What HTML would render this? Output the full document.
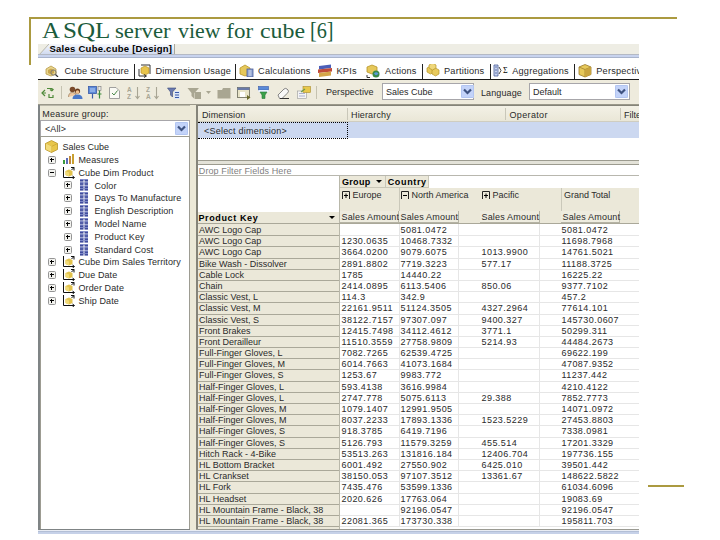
<!DOCTYPE html>
<html><head><meta charset="utf-8">
<style>
*{margin:0;padding:0;box-sizing:border-box}
html,body{width:720px;height:540px;overflow:hidden;background:#fff;position:relative}
body{font-family:"Liberation Sans",sans-serif;color:#000}
.a{position:absolute}
.t{position:absolute;white-space:nowrap;font-size:9px;line-height:10px;color:#2a2a2a}
.title{position:absolute;left:42px;top:16.5px;font-family:"Liberation Serif",serif;font-size:23px;line-height:28px;color:#1c5c3c;white-space:nowrap}
</style></head><body>
<div class="a" style="left:29px;top:17px;width:648px;height:2px;background:#ab9a40"></div>
<div class="a" style="left:29px;top:17px;width:2px;height:48px;background:#ab9a40"></div>
<div class="a" style="left:648px;top:485px;width:36px;height:2px;background:#ab9a40"></div>
<div class="title" style="left:41.6px;transform:scale(1.08,1);transform-origin:0 20.5px;">A</div>
<div class="title" style="left:63.2px;transform:scale(1.09,1);transform-origin:0 20.5px;">SQL</div>
<div class="title" style="left:115px;transform:scale(0.99,0.9);transform-origin:0 20.5px;">server</div>
<div class="title" style="left:178.3px;transform:scale(0.95,0.9);transform-origin:0 20.5px;">view</div>
<div class="title" style="left:226.3px;transform:scale(1.0,0.9);transform-origin:0 20.5px;">for</div>
<div class="title" style="left:259.6px;transform:scale(1.04,0.9);transform-origin:0 20.5px;">cube</div>
<div class="title" style="left:309.8px;transform:scale(0.88,1);transform-origin:0 20.5px;">[6]</div>
<div class="a" style="left:0;top:0;width:639px;height:534px;overflow:hidden">
<div class="a" style="left:38px;top:44px;width:601px;height:490px;background:#ece9d8"></div>
<div class="a" style="left:38px;top:44px;width:601px;height:11px;background:#eeede4"></div>
<svg class="a" style="left:38px;top:44px" width="137" height="12"><defs><linearGradient id="tg" x1="0" y1="0" x2="0" y2="1"><stop offset="0" stop-color="#f6f7fb"/><stop offset="1" stop-color="#c9d5ee"/></linearGradient></defs><path d="M0 12 L11 0 L136 0 L136 12 Z" fill="url(#tg)"/><path d="M0 12 L11 0" stroke="#b9b8ac" stroke-width="1"/><path d="M136.5 0 L136.5 12" stroke="#a9a89c" stroke-width="1"/></svg>
<div class="t" style="left:49.5px;top:43px;color:#000;font-weight:bold;font-size:9.5px;line-height:12px;letter-spacing:0.25px">Sales Cube.cube [Design]</div>
<div class="a" style="left:38px;top:54px;width:601px;height:1px;background:#b4b9c4"></div>
<div class="a" style="left:38px;top:55px;width:601px;height:3px;background:#c8d3ee"></div>
<div class="a" style="left:38px;top:57px;width:601px;height:1px;background:#a9b4cc"></div>
<div class="a" style="left:38px;top:58px;width:601px;height:21px;background:#fff"></div>
<div class="a" style="left:38px;top:79px;width:601px;height:1px;background:#1a1a1a"></div>
<div class="t" style="left:64.5px;top:66px;font-size:9.2px;line-height:10px;letter-spacing:0.2px">Cube Structure</div>
<div class="t" style="left:155.5px;top:66px;font-size:9.2px;line-height:10px;letter-spacing:0.2px">Dimension Usage</div>
<div class="t" style="left:258.1px;top:66px;font-size:9.2px;line-height:10px;letter-spacing:0.2px">Calculations</div>
<div class="t" style="left:336.5px;top:66px;font-size:9.2px;line-height:10px;letter-spacing:0.2px">KPIs</div>
<div class="t" style="left:385.1px;top:66px;font-size:9.2px;line-height:10px;letter-spacing:0.2px">Actions</div>
<div class="t" style="left:444.0px;top:66px;font-size:9.2px;line-height:10px;letter-spacing:0.2px">Partitions</div>
<div class="t" style="left:512.2px;top:66px;font-size:9.2px;line-height:10px;letter-spacing:0.2px">Aggregations</div>
<div class="t" style="left:596.3px;top:66px;font-size:9.2px;line-height:10px;letter-spacing:0.2px">Perspectives</div>
<div class="a" style="left:134px;top:64px;width:1px;height:15px;background:#222"></div>
<div class="a" style="left:235px;top:64px;width:1px;height:15px;background:#222"></div>
<div class="a" style="left:422px;top:64px;width:1px;height:15px;background:#222"></div>
<div class="a" style="left:490px;top:64px;width:1px;height:15px;background:#222"></div>
<div class="a" style="left:574px;top:64px;width:1px;height:15px;background:#222"></div>
<div class="a" style="left:38px;top:80px;width:601px;height:24px;background:#eeebdd"></div>
<div class="a" style="left:38px;top:104px;width:601px;height:1px;background:#9a988a"></div>
<div class="a" style="left:38px;top:105px;width:152px;height:1px;background:#b9b7a9"></div>
<svg class="a" style="left:45px;top:65px" width="14" height="12"><path d="M1 4L6 1L11 4V9L6 11L1 9Z" fill="#e9d58c" stroke="#b79b4a" stroke-width="0.8"/><path d="M3 5L6 3.5L9 5V8L6 9.5L3 8Z" fill="#c9a64e"/><circle cx="8.5" cy="7.5" r="2.6" fill="none" stroke="#777" stroke-width="0.9"/><path d="M10.5 9.5L13 12" stroke="#333" stroke-width="1.2"/></svg>
<svg class="a" style="left:138px;top:64px" width="13" height="14"><path d="M3 1H12V10" fill="none" stroke="#333"/><path d="M3 4L7 2L11 4V9L7 11L3 9Z" fill="#e8c44c" stroke="#b8932a" stroke-width="0.7"/><path d="M1 5V12H8" fill="none" stroke="#333"/><path d="M6 10.5L8.5 12L6 13.5" fill="none" stroke="#333"/></svg>
<svg class="a" style="left:239px;top:64px" width="15" height="13"><path d="M1 4L6 1L11 4V10L6 12L1 10Z" fill="#e6c85a" stroke="#b8962a" stroke-width="0.8"/><rect x="8" y="5" width="6" height="8" fill="#8aa0d0" stroke="#4a5d9a" stroke-width="0.8"/><path d="M9.5 7H12.5M9.5 9H12.5M9.5 11H12.5" stroke="#fff" stroke-width="0.7"/></svg>
<svg class="a" style="left:317px;top:64px" width="16" height="13"><path d="M2 2L14 0.5V4L2 5.5Z" fill="#4b5fb8"/><path d="M1 5.5L15 4V7.5L1 9Z" fill="#c04b3a"/><path d="M2 9L14 7.5V11.5L2 13Z" fill="#d4a64a"/></svg>
<svg class="a" style="left:366px;top:64px" width="15" height="14"><path d="M1 3L6 1L11 3V8L6 10L1 8Z" fill="#e6c85a" stroke="#b8962a" stroke-width="0.8"/><circle cx="10" cy="10" r="3.5" fill="#3a8a4a"/><path d="M8 9.5Q10 7 12.5 9.5Q10 13 8 9.5Z" fill="#5a9ad8"/><path d="M1 11V13.5H4" fill="none" stroke="#333"/></svg>
<svg class="a" style="left:426px;top:64px" width="14" height="13"><path d="M1 4L4.5 2L8 4V8L4.5 10L1 8Z" fill="#e6c85a" stroke="#b8962a" stroke-width="0.7"/><path d="M6 6L9.5 4L13 6V10L9.5 12L6 10Z" fill="#e8ca5c" stroke="#b8962a" stroke-width="0.7"/><path d="M3 1L6.5 -1L10 1V4L6.5 6L3 4Z" fill="#efd77a" stroke="#b8962a" stroke-width="0.7"/></svg>
<svg class="a" style="left:493px;top:64px" width="17" height="13"><path d="M1 1H5V12H1Z" fill="#c8d4f0" stroke="#4a5d9a" stroke-width="0.8"/><path d="M2 3H4M2 6H4M2 9H4" stroke="#4a5d9a" stroke-width="0.8"/><path d="M6 3L8 6.5L6 10" fill="none" stroke="#333" stroke-width="0.9"/><text x="10" y="9" font-family="Liberation Serif" font-size="8" fill="#000">&#931;</text></svg>
<svg class="a" style="left:578px;top:64px" width="14" height="14"><path d="M1 3L7 0.5L13 3V10.5L7 13L1 10.5Z" fill="#e6c85a" stroke="#9a7a2a" stroke-width="0.8"/><path d="M1 3L7 5.5L13 3M7 5.5V13" fill="none" stroke="#9a7a2a" stroke-width="0.7"/><path d="M7 5.5L13 3V10.5L7 13Z" fill="#c9a43e"/></svg>
<svg class="a" style="left:41px;top:87px" width="13" height="12"><path d="M6 1.5H11V4M11 4L9 2.5M11 4L12.5 2" fill="none" stroke="#4f8a3a" stroke-width="1.2"/><path d="M4 3L1 6L4 9" fill="none" stroke="#4f8a3a" stroke-width="1.2"/><path d="M1 6H5" stroke="#4f8a3a" stroke-width="1"/><path d="M8 7V10.5H12V8" fill="none" stroke="#4f8a3a" stroke-width="1.2"/></svg>
<div class="a" style="left:61px;top:86px;width:1px;height:13px;background:#c5c2b0"></div>
<svg class="a" style="left:68px;top:86px" width="15" height="13"><circle cx="4.5" cy="3.5" r="2.8" fill="#7a4a2a"/><path d="M0.5 11Q0.5 6.5 4.5 6.5Q8 6.5 8 9" fill="#f0c8a0" stroke="#8a6a4a" stroke-width="0.6"/><circle cx="9.5" cy="5" r="2.6" fill="#6a3a1a"/><circle cx="9.5" cy="6" r="1.8" fill="#f0c090"/><path d="M4.5 13Q4.5 8.5 9.5 8.5Q14.5 8.5 14.5 13Z" fill="#4a78c8"/></svg>
<svg class="a" style="left:88px;top:86px" width="14" height="13"><rect x="0.5" y="0.5" width="8" height="7" fill="#5c8ad8" stroke="#3a5aa8" stroke-width="0.8"/><path d="M2 3H7M2 5H7" stroke="#cfe0ff" stroke-width="0.8"/><path d="M4.5 8V12.5" stroke="#3a5aa8" stroke-width="1.2"/><rect x="10" y="0.5" width="3" height="4" fill="#e8e8e8" stroke="#777" stroke-width="0.6"/><path d="M11.5 4.5V12.5M9.5 8H13.5" stroke="#3a8a3a" stroke-width="1.2"/></svg>
<svg class="a" style="left:109px;top:87px" width="11" height="12"><path d="M0.5 0.5H7L10.5 4V11.5H0.5Z" fill="#fafaf5" stroke="#8a8a8a" stroke-width="0.8"/><path d="M3 6L5 8L8.5 3.5" fill="none" stroke="#4a8a4a" stroke-width="1"/></svg>
<svg class="a" style="left:127px;top:86px" width="14" height="14"><text x="0" y="6" font-family="Liberation Sans" font-size="6.5" font-weight="bold" fill="#a8a594">A</text><text x="0" y="12.5" font-family="Liberation Sans" font-size="6.5" font-weight="bold" fill="#a8a594">Z</text><path d="M10.5 1V12M8.5 10L10.5 12.5L12.5 10" fill="none" stroke="#a8a594" stroke-width="1.1"/></svg>
<svg class="a" style="left:146px;top:86px" width="14" height="14"><text x="0" y="6" font-family="Liberation Sans" font-size="6.5" font-weight="bold" fill="#a8a594">Z</text><text x="0" y="12.5" font-family="Liberation Sans" font-size="6.5" font-weight="bold" fill="#a8a594">A</text><path d="M10.5 1V12M8.5 10L10.5 12.5L12.5 10" fill="none" stroke="#a8a594" stroke-width="1.1"/></svg>
<svg class="a" style="left:167px;top:87px" width="14" height="13"><path d="M0.5 1H9L5.5 5V10L3.5 8V5Z" fill="#6a7ab0" stroke="#3a4a7a" stroke-width="0.6"/><rect x="7" y="4" width="6" height="8" fill="#dce6f8"/><path d="M8 5.5H12M8 8H12M8 10.5H12" stroke="#3a5aa8" stroke-width="1"/></svg>
<svg class="a" style="left:187px;top:87px" width="15" height="13"><path d="M0.5 1H12L7.5 6V12L4.5 9V6Z" fill="#a9a692"/><rect x="8" y="5" width="6" height="7" fill="#a9a692"/></svg>
<svg class="a" style="left:206px;top:91px" width="5" height="4"><path d="M0 0H5L2.5 3Z" fill="#a9a692"/></svg>
<svg class="a" style="left:217px;top:87px" width="14" height="12"><path d="M0.5 3H5L6 1H13.5V11.5H0.5Z" fill="#a9a692"/></svg>
<svg class="a" style="left:237px;top:87px" width="14" height="13"><rect x="0.5" y="0.5" width="12" height="10" fill="#e8e4c8" stroke="#6a6a5a" stroke-width="0.8"/><rect x="0.5" y="0.5" width="12" height="2.5" fill="#6a7aa8"/><rect x="3" y="5" width="5" height="5" fill="#fff"/><path d="M10 8L13.5 10.5L10 13Z" fill="#6a6a2a"/></svg>
<svg class="a" style="left:258px;top:86px" width="11" height="13"><rect x="0.5" y="0.5" width="10" height="3.5" fill="#5a8ad8" stroke="#3a5aa8" stroke-width="0.6"/><rect x="0.5" y="4" width="10" height="2" fill="#e8f0ff"/><path d="M2 6H9L7 9V12.5H4V9Z" fill="#3aa04a" stroke="#2a7a3a" stroke-width="0.6"/></svg>
<svg class="a" style="left:277px;top:87px" width="13" height="12"><path d="M1 8L7 2Q8.5 0.8 10 2L11 3Q12 4.5 10.8 5.8L5 11.5H2.5Z" fill="#f8f8f8" stroke="#6a6a6a" stroke-width="0.8"/><path d="M3 11.5H12" stroke="#333" stroke-width="1"/></svg>
<svg class="a" style="left:297px;top:86px" width="14" height="13"><rect x="0.5" y="5" width="9" height="7.5" fill="#f4f4f4" stroke="#9a9a9a" stroke-width="0.6"/><path d="M2 7.5H8M2 10H8" stroke="#9aa0c8" stroke-width="0.8"/><rect x="6" y="0.5" width="7.5" height="6" fill="#e8c84a" stroke="#a88a2a" stroke-width="0.6"/><path d="M4 6L8 3" stroke="#6a9a4a" stroke-width="1.1"/></svg>
<div class="a" style="left:316px;top:86px;width:1px;height:13px;background:#c5c2b0"></div>
<div class="t" style="left:326px;top:87px;font-size:9px;line-height:11px;letter-spacing:0.05px">Perspective</div>
<div class="a" style="left:382px;top:83px;width:92px;height:17px;background:#fff;border:1px solid #a7a6aa"></div>
<div class="t" style="left:386px;top:87px;font-size:9px;line-height:11px">Sales Cube</div>
<svg class="a" style="left:461px;top:85px" width="13" height="13"><rect x="0" y="0" width="13" height="13" rx="1" fill="#c3d3f9"/><rect x="0.5" y="0.5" width="12" height="12" rx="1" fill="none" stroke="#b2c5f1"/><path d="M3.0 4.5L6.5 8.0L10.0 4.5" fill="none" stroke="#3e5280" stroke-width="2.2"/></svg>
<div class="t" style="left:481px;top:88px;font-size:9px;line-height:11px;letter-spacing:0.1px">Language</div>
<div class="a" style="left:529px;top:83px;width:101px;height:17px;background:#fff;border:1px solid #a7a6aa"></div>
<div class="t" style="left:533px;top:87px;font-size:9px;line-height:11px">Default</div>
<svg class="a" style="left:615px;top:85px" width="13" height="13"><rect x="0" y="0" width="13" height="13" rx="1" fill="#c3d3f9"/><rect x="0.5" y="0.5" width="12" height="12" rx="1" fill="none" stroke="#b2c5f1"/><path d="M3.0 4.5L6.5 8.0L10.0 4.5" fill="none" stroke="#3e5280" stroke-width="2.2"/></svg>
<div class="t" style="left:42.3px;top:109px;font-size:9px;line-height:10px;letter-spacing:0.25px">Measure group:</div>
<div class="a" style="left:40px;top:120px;width:150px;height:17px;background:#fff;border:1px solid #a7a6aa"></div>
<div class="t" style="left:45px;top:124px;font-size:9px;line-height:10px;letter-spacing:0.1px">&lt;All&gt;</div>
<svg class="a" style="left:175px;top:122px" width="13" height="13"><rect x="0" y="0" width="13" height="13" rx="1" fill="#c3d3f9"/><rect x="0.5" y="0.5" width="12" height="12" rx="1" fill="none" stroke="#b2c5f1"/><path d="M3.0 4.5L6.5 8.0L10.0 4.5" fill="none" stroke="#3e5280" stroke-width="2.2"/></svg>
<div class="a" style="left:40px;top:136px;width:150px;height:394px;background:#fff;border:1px solid #9d9c92"></div>
<div class="a" style="left:38px;top:105px;width:2px;height:425px;background:#7f8485"></div>
<div class="a" style="left:38px;top:529px;width:152px;height:1px;background:#7f8485"></div>
<svg class="a" style="left:45px;top:140px" width="13" height="13" viewBox="0 0 13 13"><path d="M6.5 0.5L12.5 3.5V9.5L6.5 12.5L0.5 9.5V3.5Z" fill="#e8c64a" stroke="#b8962a" stroke-width="0.8"/><path d="M0.5 3.5L6.5 6.5L12.5 3.5M6.5 6.5V12.5" fill="none" stroke="#c9a633" stroke-width="0.8"/><path d="M1 3.6L6.5 6.3V12L1 9.3Z" fill="#f3dc7a"/></svg>
<div class="t" style="left:62.5px;top:142.0px;font-size:9px;line-height:11px">Sales Cube</div>
<svg class="a" style="left:48px;top:156px" width="8" height="8"><rect x="0.5" y="0.5" width="7" height="7" rx="1" fill="#f2f2ee" stroke="#959595"/><path d="M2 3.5H6" stroke="#000"/><path d="M3.5 2V6" stroke="#000"/></svg>
<svg class="a" style="left:63px;top:154px" width="11" height="10"><rect x="0" y="6" width="2" height="4" fill="#3b9a3b"/><rect x="3" y="4" width="2" height="6" fill="#5c6bb8"/><rect x="6" y="2" width="2" height="8" fill="#c28a3c"/><rect x="9" y="0" width="2" height="10" fill="#c9a030"/></svg>
<div class="t" style="left:78.5px;top:154.8px;font-size:9px;line-height:11px;letter-spacing:0.1px">Measures</div>
<svg class="a" style="left:48px;top:169px" width="8" height="8"><rect x="0.5" y="0.5" width="7" height="7" rx="1" fill="#f2f2ee" stroke="#959595"/><path d="M2 3.5H6" stroke="#000"/></svg>
<svg class="a" style="left:62px;top:166px" width="13" height="13"><path d="M1.5 1V11.5H12" fill="none" stroke="#111" stroke-width="1"/><path d="M9 1.5H12V4.5M12 1.5L9.5 4" fill="none" stroke="#111"/><path d="M10.5 10L12.5 11.5L10.5 13" fill="none" stroke="#111"/><path d="M7 3.5L10.5 5V9L7 10.5L3.5 9V5Z" fill="#e2c24c"/><path d="M3.5 5L7 6.5V10.5L3.5 9Z" fill="#f0d975"/></svg>
<div class="t" style="left:78.5px;top:167.6px;font-size:9px;line-height:11px;letter-spacing:0.1px">Cube Dim Product</div>
<svg class="a" style="left:64px;top:181px" width="8" height="8"><rect x="0.5" y="0.5" width="7" height="7" rx="1" fill="#f2f2ee" stroke="#959595"/><path d="M2 3.5H6" stroke="#000"/><path d="M3.5 2V6" stroke="#000"/></svg>
<svg class="a" style="left:80px;top:179px" width="9" height="12"><rect x="0" y="0" width="3.5" height="2.6" fill="#404c9c"/><rect x="0" y="0" width="3.5" height="1" fill="#7d88c8"/><rect x="4.5" y="0" width="3.5" height="2.6" fill="#404c9c"/><rect x="4.5" y="0" width="3.5" height="1" fill="#7d88c8"/><rect x="0" y="3.3" width="3.5" height="2.6" fill="#404c9c"/><rect x="0" y="3.3" width="3.5" height="1" fill="#7d88c8"/><rect x="4.5" y="3.3" width="3.5" height="2.6" fill="#404c9c"/><rect x="4.5" y="3.3" width="3.5" height="1" fill="#7d88c8"/><rect x="0" y="6.6" width="3.5" height="2.6" fill="#404c9c"/><rect x="0" y="6.6" width="3.5" height="1" fill="#7d88c8"/><rect x="4.5" y="6.6" width="3.5" height="2.6" fill="#404c9c"/><rect x="4.5" y="6.6" width="3.5" height="1" fill="#7d88c8"/><rect x="0" y="9.0" width="3.5" height="2.6" fill="#404c9c"/><rect x="0" y="9.0" width="3.5" height="1" fill="#7d88c8"/><rect x="4.5" y="9.0" width="3.5" height="2.6" fill="#404c9c"/><rect x="4.5" y="9.0" width="3.5" height="1" fill="#7d88c8"/></svg>
<div class="t" style="left:94.5px;top:180.5px;font-size:9px;line-height:11px;letter-spacing:0.1px">Color</div>
<svg class="a" style="left:64px;top:194px" width="8" height="8"><rect x="0.5" y="0.5" width="7" height="7" rx="1" fill="#f2f2ee" stroke="#959595"/><path d="M2 3.5H6" stroke="#000"/><path d="M3.5 2V6" stroke="#000"/></svg>
<svg class="a" style="left:80px;top:192px" width="9" height="12"><rect x="0" y="0" width="3.5" height="2.6" fill="#404c9c"/><rect x="0" y="0" width="3.5" height="1" fill="#7d88c8"/><rect x="4.5" y="0" width="3.5" height="2.6" fill="#404c9c"/><rect x="4.5" y="0" width="3.5" height="1" fill="#7d88c8"/><rect x="0" y="3.3" width="3.5" height="2.6" fill="#404c9c"/><rect x="0" y="3.3" width="3.5" height="1" fill="#7d88c8"/><rect x="4.5" y="3.3" width="3.5" height="2.6" fill="#404c9c"/><rect x="4.5" y="3.3" width="3.5" height="1" fill="#7d88c8"/><rect x="0" y="6.6" width="3.5" height="2.6" fill="#404c9c"/><rect x="0" y="6.6" width="3.5" height="1" fill="#7d88c8"/><rect x="4.5" y="6.6" width="3.5" height="2.6" fill="#404c9c"/><rect x="4.5" y="6.6" width="3.5" height="1" fill="#7d88c8"/><rect x="0" y="9.0" width="3.5" height="2.6" fill="#404c9c"/><rect x="0" y="9.0" width="3.5" height="1" fill="#7d88c8"/><rect x="4.5" y="9.0" width="3.5" height="2.6" fill="#404c9c"/><rect x="4.5" y="9.0" width="3.5" height="1" fill="#7d88c8"/></svg>
<div class="t" style="left:94.5px;top:193.3px;font-size:9px;line-height:11px;letter-spacing:0.1px">Days To Manufacture</div>
<svg class="a" style="left:64px;top:207px" width="8" height="8"><rect x="0.5" y="0.5" width="7" height="7" rx="1" fill="#f2f2ee" stroke="#959595"/><path d="M2 3.5H6" stroke="#000"/><path d="M3.5 2V6" stroke="#000"/></svg>
<svg class="a" style="left:80px;top:205px" width="9" height="12"><rect x="0" y="0" width="3.5" height="2.6" fill="#404c9c"/><rect x="0" y="0" width="3.5" height="1" fill="#7d88c8"/><rect x="4.5" y="0" width="3.5" height="2.6" fill="#404c9c"/><rect x="4.5" y="0" width="3.5" height="1" fill="#7d88c8"/><rect x="0" y="3.3" width="3.5" height="2.6" fill="#404c9c"/><rect x="0" y="3.3" width="3.5" height="1" fill="#7d88c8"/><rect x="4.5" y="3.3" width="3.5" height="2.6" fill="#404c9c"/><rect x="4.5" y="3.3" width="3.5" height="1" fill="#7d88c8"/><rect x="0" y="6.6" width="3.5" height="2.6" fill="#404c9c"/><rect x="0" y="6.6" width="3.5" height="1" fill="#7d88c8"/><rect x="4.5" y="6.6" width="3.5" height="2.6" fill="#404c9c"/><rect x="4.5" y="6.6" width="3.5" height="1" fill="#7d88c8"/><rect x="0" y="9.0" width="3.5" height="2.6" fill="#404c9c"/><rect x="0" y="9.0" width="3.5" height="1" fill="#7d88c8"/><rect x="4.5" y="9.0" width="3.5" height="2.6" fill="#404c9c"/><rect x="4.5" y="9.0" width="3.5" height="1" fill="#7d88c8"/></svg>
<div class="t" style="left:94.5px;top:206.1px;font-size:9px;line-height:11px;letter-spacing:0.1px">English Description</div>
<svg class="a" style="left:64px;top:220px" width="8" height="8"><rect x="0.5" y="0.5" width="7" height="7" rx="1" fill="#f2f2ee" stroke="#959595"/><path d="M2 3.5H6" stroke="#000"/><path d="M3.5 2V6" stroke="#000"/></svg>
<svg class="a" style="left:80px;top:218px" width="9" height="12"><rect x="0" y="0" width="3.5" height="2.6" fill="#404c9c"/><rect x="0" y="0" width="3.5" height="1" fill="#7d88c8"/><rect x="4.5" y="0" width="3.5" height="2.6" fill="#404c9c"/><rect x="4.5" y="0" width="3.5" height="1" fill="#7d88c8"/><rect x="0" y="3.3" width="3.5" height="2.6" fill="#404c9c"/><rect x="0" y="3.3" width="3.5" height="1" fill="#7d88c8"/><rect x="4.5" y="3.3" width="3.5" height="2.6" fill="#404c9c"/><rect x="4.5" y="3.3" width="3.5" height="1" fill="#7d88c8"/><rect x="0" y="6.6" width="3.5" height="2.6" fill="#404c9c"/><rect x="0" y="6.6" width="3.5" height="1" fill="#7d88c8"/><rect x="4.5" y="6.6" width="3.5" height="2.6" fill="#404c9c"/><rect x="4.5" y="6.6" width="3.5" height="1" fill="#7d88c8"/><rect x="0" y="9.0" width="3.5" height="2.6" fill="#404c9c"/><rect x="0" y="9.0" width="3.5" height="1" fill="#7d88c8"/><rect x="4.5" y="9.0" width="3.5" height="2.6" fill="#404c9c"/><rect x="4.5" y="9.0" width="3.5" height="1" fill="#7d88c8"/></svg>
<div class="t" style="left:94.5px;top:218.9px;font-size:9px;line-height:11px;letter-spacing:0.1px">Model Name</div>
<svg class="a" style="left:64px;top:233px" width="8" height="8"><rect x="0.5" y="0.5" width="7" height="7" rx="1" fill="#f2f2ee" stroke="#959595"/><path d="M2 3.5H6" stroke="#000"/><path d="M3.5 2V6" stroke="#000"/></svg>
<svg class="a" style="left:80px;top:231px" width="9" height="12"><rect x="0" y="0" width="3.5" height="2.6" fill="#404c9c"/><rect x="0" y="0" width="3.5" height="1" fill="#7d88c8"/><rect x="4.5" y="0" width="3.5" height="2.6" fill="#404c9c"/><rect x="4.5" y="0" width="3.5" height="1" fill="#7d88c8"/><rect x="0" y="3.3" width="3.5" height="2.6" fill="#404c9c"/><rect x="0" y="3.3" width="3.5" height="1" fill="#7d88c8"/><rect x="4.5" y="3.3" width="3.5" height="2.6" fill="#404c9c"/><rect x="4.5" y="3.3" width="3.5" height="1" fill="#7d88c8"/><rect x="0" y="6.6" width="3.5" height="2.6" fill="#404c9c"/><rect x="0" y="6.6" width="3.5" height="1" fill="#7d88c8"/><rect x="4.5" y="6.6" width="3.5" height="2.6" fill="#404c9c"/><rect x="4.5" y="6.6" width="3.5" height="1" fill="#7d88c8"/><rect x="0" y="9.0" width="3.5" height="2.6" fill="#404c9c"/><rect x="0" y="9.0" width="3.5" height="1" fill="#7d88c8"/><rect x="4.5" y="9.0" width="3.5" height="2.6" fill="#404c9c"/><rect x="4.5" y="9.0" width="3.5" height="1" fill="#7d88c8"/></svg>
<div class="t" style="left:94.5px;top:231.7px;font-size:9px;line-height:11px;letter-spacing:0.1px">Product Key</div>
<svg class="a" style="left:64px;top:246px" width="8" height="8"><rect x="0.5" y="0.5" width="7" height="7" rx="1" fill="#f2f2ee" stroke="#959595"/><path d="M2 3.5H6" stroke="#000"/><path d="M3.5 2V6" stroke="#000"/></svg>
<svg class="a" style="left:80px;top:244px" width="9" height="12"><rect x="0" y="0" width="3.5" height="2.6" fill="#404c9c"/><rect x="0" y="0" width="3.5" height="1" fill="#7d88c8"/><rect x="4.5" y="0" width="3.5" height="2.6" fill="#404c9c"/><rect x="4.5" y="0" width="3.5" height="1" fill="#7d88c8"/><rect x="0" y="3.3" width="3.5" height="2.6" fill="#404c9c"/><rect x="0" y="3.3" width="3.5" height="1" fill="#7d88c8"/><rect x="4.5" y="3.3" width="3.5" height="2.6" fill="#404c9c"/><rect x="4.5" y="3.3" width="3.5" height="1" fill="#7d88c8"/><rect x="0" y="6.6" width="3.5" height="2.6" fill="#404c9c"/><rect x="0" y="6.6" width="3.5" height="1" fill="#7d88c8"/><rect x="4.5" y="6.6" width="3.5" height="2.6" fill="#404c9c"/><rect x="4.5" y="6.6" width="3.5" height="1" fill="#7d88c8"/><rect x="0" y="9.0" width="3.5" height="2.6" fill="#404c9c"/><rect x="0" y="9.0" width="3.5" height="1" fill="#7d88c8"/><rect x="4.5" y="9.0" width="3.5" height="2.6" fill="#404c9c"/><rect x="4.5" y="9.0" width="3.5" height="1" fill="#7d88c8"/></svg>
<div class="t" style="left:94.5px;top:244.6px;font-size:9px;line-height:11px;letter-spacing:0.1px">Standard Cost</div>
<svg class="a" style="left:48px;top:258px" width="8" height="8"><rect x="0.5" y="0.5" width="7" height="7" rx="1" fill="#f2f2ee" stroke="#959595"/><path d="M2 3.5H6" stroke="#000"/><path d="M3.5 2V6" stroke="#000"/></svg>
<svg class="a" style="left:62px;top:255px" width="13" height="13"><path d="M1.5 1V11.5H12" fill="none" stroke="#111" stroke-width="1"/><path d="M9 1.5H12V4.5M12 1.5L9.5 4" fill="none" stroke="#111"/><path d="M10.5 10L12.5 11.5L10.5 13" fill="none" stroke="#111"/><path d="M7 3.5L10.5 5V9L7 10.5L3.5 9V5Z" fill="#e2c24c"/><path d="M3.5 5L7 6.5V10.5L3.5 9Z" fill="#f0d975"/></svg>
<div class="t" style="left:78.5px;top:257.4px;font-size:9px;line-height:11px;letter-spacing:0.1px">Cube Dim Sales Territory</div>
<svg class="a" style="left:48px;top:271px" width="8" height="8"><rect x="0.5" y="0.5" width="7" height="7" rx="1" fill="#f2f2ee" stroke="#959595"/><path d="M2 3.5H6" stroke="#000"/><path d="M3.5 2V6" stroke="#000"/></svg>
<svg class="a" style="left:62px;top:268px" width="13" height="13"><path d="M1.5 1V11.5H12" fill="none" stroke="#111" stroke-width="1"/><path d="M9 1.5H12V4.5M12 1.5L9.5 4" fill="none" stroke="#111"/><path d="M10.5 10L12.5 11.5L10.5 13" fill="none" stroke="#111"/><path d="M7 3.5L10.5 5V9L7 10.5L3.5 9V5Z" fill="#e2c24c"/><path d="M3.5 5L7 6.5V10.5L3.5 9Z" fill="#f0d975"/></svg>
<div class="t" style="left:78.5px;top:270.2px;font-size:9px;line-height:11px;letter-spacing:0.1px">Due Date</div>
<svg class="a" style="left:48px;top:284px" width="8" height="8"><rect x="0.5" y="0.5" width="7" height="7" rx="1" fill="#f2f2ee" stroke="#959595"/><path d="M2 3.5H6" stroke="#000"/><path d="M3.5 2V6" stroke="#000"/></svg>
<svg class="a" style="left:62px;top:281px" width="13" height="13"><path d="M1.5 1V11.5H12" fill="none" stroke="#111" stroke-width="1"/><path d="M9 1.5H12V4.5M12 1.5L9.5 4" fill="none" stroke="#111"/><path d="M10.5 10L12.5 11.5L10.5 13" fill="none" stroke="#111"/><path d="M7 3.5L10.5 5V9L7 10.5L3.5 9V5Z" fill="#e2c24c"/><path d="M3.5 5L7 6.5V10.5L3.5 9Z" fill="#f0d975"/></svg>
<div class="t" style="left:78.5px;top:283.0px;font-size:9px;line-height:11px;letter-spacing:0.1px">Order Date</div>
<svg class="a" style="left:48px;top:297px" width="8" height="8"><rect x="0.5" y="0.5" width="7" height="7" rx="1" fill="#f2f2ee" stroke="#959595"/><path d="M2 3.5H6" stroke="#000"/><path d="M3.5 2V6" stroke="#000"/></svg>
<svg class="a" style="left:62px;top:294px" width="13" height="13"><path d="M1.5 1V11.5H12" fill="none" stroke="#111" stroke-width="1"/><path d="M9 1.5H12V4.5M12 1.5L9.5 4" fill="none" stroke="#111"/><path d="M10.5 10L12.5 11.5L10.5 13" fill="none" stroke="#111"/><path d="M7 3.5L10.5 5V9L7 10.5L3.5 9V5Z" fill="#e2c24c"/><path d="M3.5 5L7 6.5V10.5L3.5 9Z" fill="#f0d975"/></svg>
<div class="t" style="left:78.5px;top:295.8px;font-size:9px;line-height:11px;letter-spacing:0.1px">Ship Date</div>
<div class="a" style="left:196px;top:105px;width:443px;height:425px;background:#fff"></div>
<div class="a" style="left:196px;top:105px;width:2px;height:425px;background:#858479"></div>
<div class="a" style="left:196px;top:105px;width:443px;height:1px;background:#858479"></div>
<div class="a" style="left:198px;top:106px;width:441px;height:16px;background:linear-gradient(#f3f1e6,#e9e6d6)"></div>
<div class="a" style="left:198px;top:121px;width:441px;height:1px;background:#cfcdc0"></div>
<div class="a" style="left:346.5px;top:108px;width:1px;height:12px;background:#c9c7b9"></div>
<div class="a" style="left:505px;top:108px;width:1px;height:12px;background:#c9c7b9"></div>
<div class="a" style="left:620px;top:108px;width:1px;height:12px;background:#c9c7b9"></div>
<div class="t" style="left:202px;top:110px;font-size:9px;line-height:10px;letter-spacing:0.1px">Dimension</div>
<div class="t" style="left:351px;top:110px;font-size:9px;line-height:10px;letter-spacing:0.15px">Hierarchy</div>
<div class="t" style="left:509.5px;top:110px;font-size:9px;line-height:10px;letter-spacing:0.35px">Operator</div>
<div class="t" style="left:624px;top:110px;font-size:9px;line-height:10px">Filter Expression</div>
<div class="a" style="left:198px;top:122px;width:441px;height:16px;background:#ccd8f0"></div>
<div class="a" style="left:198px;top:122px;width:150px;height:17px;border:1px dotted #000;border-left:none"></div>
<div class="t" style="left:204px;top:126px;font-size:9px;line-height:10px;letter-spacing:0.22px">&lt;Select dimension&gt;</div>
<div class="a" style="left:198px;top:160px;width:441px;height:1px;background:#9c9b8f"></div>
<div class="a" style="left:198px;top:161px;width:441px;height:3px;background:#e3e2d8"></div>
<div class="a" style="left:198px;top:164px;width:441px;height:1px;background:#9c9b8f"></div>
<div class="t" style="left:198.8px;top:166px;font-size:9px;line-height:10px;color:#7f7f7f;letter-spacing:0.1px">Drop Filter Fields Here</div>
<div class="a" style="left:198px;top:175px;width:441px;height:1px;background:#b8b7ae"></div>
<div class="a" style="left:198px;top:176px;width:441px;height:47px;background:#fff"></div>
<div class="a" style="left:198px;top:212px;width:142px;height:11px;background:#ebe8d9"></div>
<div class="t" style="left:198.5px;top:212.5px;color:#000;font-weight:bold;font-size:9px;line-height:11px;letter-spacing:0.62px">Product Key</div>
<svg class="a" style="left:329px;top:216px" width="7" height="4"><path d="M0 0H6L3 3Z" fill="#000"/></svg>
<div class="a" style="left:340px;top:176px;width:46px;height:12px;background:#ebe8d9;border-right:1px solid #c9c7b8;border-bottom:1px solid #c9c7b8"></div>
<div class="a" style="left:386px;top:176px;width:43px;height:12px;background:#ebe8d9;border-right:1px solid #c9c7b8;border-bottom:1px solid #c9c7b8"></div>
<div class="t" style="left:342px;top:177px;color:#000;font-weight:bold;font-size:9px;line-height:11px;letter-spacing:0.3px">Group</div>
<svg class="a" style="left:376px;top:180px" width="7" height="4"><path d="M0 0H6L3 3Z" fill="#000"/></svg>
<div class="t" style="left:387.7px;top:177px;color:#000;font-weight:bold;font-size:9px;line-height:11px;letter-spacing:0.65px">Country</div>
<div class="a" style="left:340px;top:188px;width:299px;height:35px;background:#ebe8d9"></div>
<div class="a" style="left:399px;top:188px;width:1px;height:35px;background:#cac8ba"></div>
<div class="a" style="left:561px;top:188px;width:1px;height:35px;background:#cac8ba"></div>
<div class="a" style="left:339px;top:176px;width:1px;height:354px;background:#b9b8aa"></div>
<svg class="a" style="left:342px;top:191px" width="9" height="8"><path d="M0.5 8V0.5H7.5V8" fill="none" stroke="#222" stroke-width="1"/><path d="M2 4.5H6" stroke="#000"/><path d="M4 2.5V7" stroke="#000"/></svg>
<div class="t" style="left:352.5px;top:189.5px;font-size:9px;line-height:11px">Europe</div>
<svg class="a" style="left:401px;top:191px" width="9" height="8"><path d="M0.5 8V0.5H7.5V8" fill="none" stroke="#222" stroke-width="1"/><path d="M2 4.5H6" stroke="#000"/></svg>
<div class="t" style="left:411.5px;top:189.5px;font-size:9px;line-height:11px">North America</div>
<svg class="a" style="left:482px;top:191px" width="9" height="8"><path d="M0.5 8V0.5H7.5V8" fill="none" stroke="#222" stroke-width="1"/><path d="M2 4.5H6" stroke="#000"/><path d="M4 2.5V7" stroke="#000"/></svg>
<div class="t" style="left:492.5px;top:189.5px;font-size:9px;line-height:11px">Pacific</div>
<div class="t" style="left:564px;top:189.5px;font-size:9px;line-height:11px">Grand Total</div>
<div class="a" style="left:340px;top:211px;width:59px;height:12px;background:#eeecdf;border-right:1px solid #b5b3a4;border-bottom:1px solid #b5b3a4"></div>
<div class="t" style="left:341.5px;top:212px;font-size:9px;line-height:11px;letter-spacing:0.18px">Sales Amount</div>
<div class="a" style="left:399px;top:211px;width:59.5px;height:12px;background:#eeecdf;border-right:1px solid #b5b3a4;border-bottom:1px solid #b5b3a4"></div>
<div class="t" style="left:400.5px;top:212px;font-size:9px;line-height:11px;letter-spacing:0.18px">Sales Amount</div>
<div class="a" style="left:480px;top:211px;width:59.6px;height:12px;background:#eeecdf;border-right:1px solid #b5b3a4;border-bottom:1px solid #b5b3a4"></div>
<div class="t" style="left:481.5px;top:212px;font-size:9px;line-height:11px;letter-spacing:0.18px">Sales Amount</div>
<div class="a" style="left:561px;top:211px;width:59px;height:12px;background:#eeecdf;border-right:1px solid #b5b3a4;border-bottom:1px solid #b5b3a4"></div>
<div class="t" style="left:562.5px;top:212px;font-size:9px;line-height:11px;letter-spacing:0.18px">Sales Amount</div>
<div class="a" style="left:198px;top:223px;width:441px;height:1px;background:#aaa899"></div>
<div class="a" style="left:198px;top:224.01px;width:141px;height:11.68846153846154px;background:#ebe8d9"></div>
<div class="t" style="left:199px;top:225.01px;font-size:9px;line-height:11px">AWC Logo Cap</div>
<div class="t" style="left:400.5px;top:225.01px;font-size:9px;line-height:11px;letter-spacing:0.45px">5081.0472</div>
<div class="t" style="left:561.5px;top:225.01px;font-size:9px;line-height:11px;letter-spacing:0.45px">5081.0472</div>
<div class="a" style="left:198px;top:235.2px;width:141px;height:11.68846153846154px;background:#ebe8d9"></div>
<div class="t" style="left:199px;top:236.2px;font-size:9px;line-height:11px">AWC Logo Cap</div>
<div class="t" style="left:341.5px;top:236.2px;font-size:9px;line-height:11px;letter-spacing:0.45px">1230.0635</div>
<div class="t" style="left:400.5px;top:236.2px;font-size:9px;line-height:11px;letter-spacing:0.45px">10468.7332</div>
<div class="t" style="left:561.5px;top:236.2px;font-size:9px;line-height:11px;letter-spacing:0.45px">11698.7968</div>
<div class="a" style="left:198px;top:246.39px;width:141px;height:11.68846153846154px;background:#ebe8d9"></div>
<div class="t" style="left:199px;top:247.39px;font-size:9px;line-height:11px">AWC Logo Cap</div>
<div class="t" style="left:341.5px;top:247.39px;font-size:9px;line-height:11px;letter-spacing:0.45px">3664.0200</div>
<div class="t" style="left:400.5px;top:247.39px;font-size:9px;line-height:11px;letter-spacing:0.45px">9079.6075</div>
<div class="t" style="left:481.5px;top:247.39px;font-size:9px;line-height:11px;letter-spacing:0.45px">1013.9900</div>
<div class="t" style="left:561.5px;top:247.39px;font-size:9px;line-height:11px;letter-spacing:0.45px">14761.5021</div>
<div class="a" style="left:198px;top:257.58px;width:141px;height:11.68846153846154px;background:#ebe8d9"></div>
<div class="t" style="left:199px;top:258.58px;font-size:9px;line-height:11px">Bike Wash - Dissolver</div>
<div class="t" style="left:341.5px;top:258.58px;font-size:9px;line-height:11px;letter-spacing:0.45px">2891.8802</div>
<div class="t" style="left:400.5px;top:258.58px;font-size:9px;line-height:11px;letter-spacing:0.45px">7719.3223</div>
<div class="t" style="left:481.5px;top:258.58px;font-size:9px;line-height:11px;letter-spacing:0.45px">577.17</div>
<div class="t" style="left:561.5px;top:258.58px;font-size:9px;line-height:11px;letter-spacing:0.45px">11188.3725</div>
<div class="a" style="left:198px;top:268.77px;width:141px;height:11.68846153846154px;background:#ebe8d9"></div>
<div class="t" style="left:199px;top:269.77px;font-size:9px;line-height:11px">Cable Lock</div>
<div class="t" style="left:341.5px;top:269.77px;font-size:9px;line-height:11px;letter-spacing:0.45px">1785</div>
<div class="t" style="left:400.5px;top:269.77px;font-size:9px;line-height:11px;letter-spacing:0.45px">14440.22</div>
<div class="t" style="left:561.5px;top:269.77px;font-size:9px;line-height:11px;letter-spacing:0.45px">16225.22</div>
<div class="a" style="left:198px;top:279.95px;width:141px;height:11.68846153846154px;background:#ebe8d9"></div>
<div class="t" style="left:199px;top:280.95px;font-size:9px;line-height:11px">Chain</div>
<div class="t" style="left:341.5px;top:280.95px;font-size:9px;line-height:11px;letter-spacing:0.45px">2414.0895</div>
<div class="t" style="left:400.5px;top:280.95px;font-size:9px;line-height:11px;letter-spacing:0.45px">6113.5406</div>
<div class="t" style="left:481.5px;top:280.95px;font-size:9px;line-height:11px;letter-spacing:0.45px">850.06</div>
<div class="t" style="left:561.5px;top:280.95px;font-size:9px;line-height:11px;letter-spacing:0.45px">9377.7102</div>
<div class="a" style="left:198px;top:291.14px;width:141px;height:11.68846153846154px;background:#ebe8d9"></div>
<div class="t" style="left:199px;top:292.14px;font-size:9px;line-height:11px">Classic Vest, L</div>
<div class="t" style="left:341.5px;top:292.14px;font-size:9px;line-height:11px;letter-spacing:0.45px">114.3</div>
<div class="t" style="left:400.5px;top:292.14px;font-size:9px;line-height:11px;letter-spacing:0.45px">342.9</div>
<div class="t" style="left:561.5px;top:292.14px;font-size:9px;line-height:11px;letter-spacing:0.45px">457.2</div>
<div class="a" style="left:198px;top:302.33px;width:141px;height:11.68846153846154px;background:#ebe8d9"></div>
<div class="t" style="left:199px;top:303.33px;font-size:9px;line-height:11px">Classic Vest, M</div>
<div class="t" style="left:341.5px;top:303.33px;font-size:9px;line-height:11px;letter-spacing:0.45px">22161.9511</div>
<div class="t" style="left:400.5px;top:303.33px;font-size:9px;line-height:11px;letter-spacing:0.45px">51124.3505</div>
<div class="t" style="left:481.5px;top:303.33px;font-size:9px;line-height:11px;letter-spacing:0.45px">4327.2964</div>
<div class="t" style="left:561.5px;top:303.33px;font-size:9px;line-height:11px;letter-spacing:0.45px">77614.101</div>
<div class="a" style="left:198px;top:313.52px;width:141px;height:11.68846153846154px;background:#ebe8d9"></div>
<div class="t" style="left:199px;top:314.52px;font-size:9px;line-height:11px">Classic Vest, S</div>
<div class="t" style="left:341.5px;top:314.52px;font-size:9px;line-height:11px;letter-spacing:0.45px">38122.7157</div>
<div class="t" style="left:400.5px;top:314.52px;font-size:9px;line-height:11px;letter-spacing:0.45px">97307.097</div>
<div class="t" style="left:481.5px;top:314.52px;font-size:9px;line-height:11px;letter-spacing:0.45px">9400.327</div>
<div class="t" style="left:561.5px;top:314.52px;font-size:9px;line-height:11px;letter-spacing:0.45px">145730.0607</div>
<div class="a" style="left:198px;top:324.71px;width:141px;height:11.68846153846154px;background:#ebe8d9"></div>
<div class="t" style="left:199px;top:325.71px;font-size:9px;line-height:11px">Front Brakes</div>
<div class="t" style="left:341.5px;top:325.71px;font-size:9px;line-height:11px;letter-spacing:0.45px">12415.7498</div>
<div class="t" style="left:400.5px;top:325.71px;font-size:9px;line-height:11px;letter-spacing:0.45px">34112.4612</div>
<div class="t" style="left:481.5px;top:325.71px;font-size:9px;line-height:11px;letter-spacing:0.45px">3771.1</div>
<div class="t" style="left:561.5px;top:325.71px;font-size:9px;line-height:11px;letter-spacing:0.45px">50299.311</div>
<div class="a" style="left:198px;top:335.9px;width:141px;height:11.68846153846154px;background:#ebe8d9"></div>
<div class="t" style="left:199px;top:336.9px;font-size:9px;line-height:11px">Front Derailleur</div>
<div class="t" style="left:341.5px;top:336.9px;font-size:9px;line-height:11px;letter-spacing:0.45px">11510.3559</div>
<div class="t" style="left:400.5px;top:336.9px;font-size:9px;line-height:11px;letter-spacing:0.45px">27758.9809</div>
<div class="t" style="left:481.5px;top:336.9px;font-size:9px;line-height:11px;letter-spacing:0.45px">5214.93</div>
<div class="t" style="left:561.5px;top:336.9px;font-size:9px;line-height:11px;letter-spacing:0.45px">44484.2673</div>
<div class="a" style="left:198px;top:347.08px;width:141px;height:11.68846153846154px;background:#ebe8d9"></div>
<div class="t" style="left:199px;top:348.08px;font-size:9px;line-height:11px">Full-Finger Gloves, L</div>
<div class="t" style="left:341.5px;top:348.08px;font-size:9px;line-height:11px;letter-spacing:0.45px">7082.7265</div>
<div class="t" style="left:400.5px;top:348.08px;font-size:9px;line-height:11px;letter-spacing:0.45px">62539.4725</div>
<div class="t" style="left:561.5px;top:348.08px;font-size:9px;line-height:11px;letter-spacing:0.45px">69622.199</div>
<div class="a" style="left:198px;top:358.27px;width:141px;height:11.68846153846154px;background:#ebe8d9"></div>
<div class="t" style="left:199px;top:359.27px;font-size:9px;line-height:11px">Full-Finger Gloves, M</div>
<div class="t" style="left:341.5px;top:359.27px;font-size:9px;line-height:11px;letter-spacing:0.45px">6014.7663</div>
<div class="t" style="left:400.5px;top:359.27px;font-size:9px;line-height:11px;letter-spacing:0.45px">41073.1684</div>
<div class="t" style="left:561.5px;top:359.27px;font-size:9px;line-height:11px;letter-spacing:0.45px">47087.9352</div>
<div class="a" style="left:198px;top:369.46px;width:141px;height:11.68846153846154px;background:#ebe8d9"></div>
<div class="t" style="left:199px;top:370.46px;font-size:9px;line-height:11px">Full-Finger Gloves, S</div>
<div class="t" style="left:341.5px;top:370.46px;font-size:9px;line-height:11px;letter-spacing:0.45px">1253.67</div>
<div class="t" style="left:400.5px;top:370.46px;font-size:9px;line-height:11px;letter-spacing:0.45px">9983.772</div>
<div class="t" style="left:561.5px;top:370.46px;font-size:9px;line-height:11px;letter-spacing:0.45px">11237.442</div>
<div class="a" style="left:198px;top:380.65px;width:141px;height:11.68846153846154px;background:#ebe8d9"></div>
<div class="t" style="left:199px;top:381.65px;font-size:9px;line-height:11px">Half-Finger Gloves, L</div>
<div class="t" style="left:341.5px;top:381.65px;font-size:9px;line-height:11px;letter-spacing:0.45px">593.4138</div>
<div class="t" style="left:400.5px;top:381.65px;font-size:9px;line-height:11px;letter-spacing:0.45px">3616.9984</div>
<div class="t" style="left:561.5px;top:381.65px;font-size:9px;line-height:11px;letter-spacing:0.45px">4210.4122</div>
<div class="a" style="left:198px;top:391.84px;width:141px;height:11.68846153846154px;background:#ebe8d9"></div>
<div class="t" style="left:199px;top:392.84px;font-size:9px;line-height:11px">Half-Finger Gloves, L</div>
<div class="t" style="left:341.5px;top:392.84px;font-size:9px;line-height:11px;letter-spacing:0.45px">2747.778</div>
<div class="t" style="left:400.5px;top:392.84px;font-size:9px;line-height:11px;letter-spacing:0.45px">5075.6113</div>
<div class="t" style="left:481.5px;top:392.84px;font-size:9px;line-height:11px;letter-spacing:0.45px">29.388</div>
<div class="t" style="left:561.5px;top:392.84px;font-size:9px;line-height:11px;letter-spacing:0.45px">7852.7773</div>
<div class="a" style="left:198px;top:403.03px;width:141px;height:11.68846153846154px;background:#ebe8d9"></div>
<div class="t" style="left:199px;top:404.03px;font-size:9px;line-height:11px">Half-Finger Gloves, M</div>
<div class="t" style="left:341.5px;top:404.03px;font-size:9px;line-height:11px;letter-spacing:0.45px">1079.1407</div>
<div class="t" style="left:400.5px;top:404.03px;font-size:9px;line-height:11px;letter-spacing:0.45px">12991.9505</div>
<div class="t" style="left:561.5px;top:404.03px;font-size:9px;line-height:11px;letter-spacing:0.45px">14071.0972</div>
<div class="a" style="left:198px;top:414.22px;width:141px;height:11.68846153846154px;background:#ebe8d9"></div>
<div class="t" style="left:199px;top:415.22px;font-size:9px;line-height:11px">Half-Finger Gloves, M</div>
<div class="t" style="left:341.5px;top:415.22px;font-size:9px;line-height:11px;letter-spacing:0.45px">8037.2233</div>
<div class="t" style="left:400.5px;top:415.22px;font-size:9px;line-height:11px;letter-spacing:0.45px">17893.1336</div>
<div class="t" style="left:481.5px;top:415.22px;font-size:9px;line-height:11px;letter-spacing:0.45px">1523.5229</div>
<div class="t" style="left:561.5px;top:415.22px;font-size:9px;line-height:11px;letter-spacing:0.45px">27453.8803</div>
<div class="a" style="left:198px;top:425.4px;width:141px;height:11.68846153846154px;background:#ebe8d9"></div>
<div class="t" style="left:199px;top:426.4px;font-size:9px;line-height:11px">Half-Finger Gloves, S</div>
<div class="t" style="left:341.5px;top:426.4px;font-size:9px;line-height:11px;letter-spacing:0.45px">918.3785</div>
<div class="t" style="left:400.5px;top:426.4px;font-size:9px;line-height:11px;letter-spacing:0.45px">6419.7196</div>
<div class="t" style="left:561.5px;top:426.4px;font-size:9px;line-height:11px;letter-spacing:0.45px">7338.0981</div>
<div class="a" style="left:198px;top:436.59px;width:141px;height:11.68846153846154px;background:#ebe8d9"></div>
<div class="t" style="left:199px;top:437.59px;font-size:9px;line-height:11px">Half-Finger Gloves, S</div>
<div class="t" style="left:341.5px;top:437.59px;font-size:9px;line-height:11px;letter-spacing:0.45px">5126.793</div>
<div class="t" style="left:400.5px;top:437.59px;font-size:9px;line-height:11px;letter-spacing:0.45px">11579.3259</div>
<div class="t" style="left:481.5px;top:437.59px;font-size:9px;line-height:11px;letter-spacing:0.45px">455.514</div>
<div class="t" style="left:561.5px;top:437.59px;font-size:9px;line-height:11px;letter-spacing:0.45px">17201.3329</div>
<div class="a" style="left:198px;top:447.78px;width:141px;height:11.68846153846154px;background:#ebe8d9"></div>
<div class="t" style="left:199px;top:448.78px;font-size:9px;line-height:11px">Hitch Rack - 4-Bike</div>
<div class="t" style="left:341.5px;top:448.78px;font-size:9px;line-height:11px;letter-spacing:0.45px">53513.263</div>
<div class="t" style="left:400.5px;top:448.78px;font-size:9px;line-height:11px;letter-spacing:0.45px">131816.184</div>
<div class="t" style="left:481.5px;top:448.78px;font-size:9px;line-height:11px;letter-spacing:0.45px">12406.704</div>
<div class="t" style="left:561.5px;top:448.78px;font-size:9px;line-height:11px;letter-spacing:0.45px">197736.155</div>
<div class="a" style="left:198px;top:458.97px;width:141px;height:11.68846153846154px;background:#ebe8d9"></div>
<div class="t" style="left:199px;top:459.97px;font-size:9px;line-height:11px">HL Bottom Bracket</div>
<div class="t" style="left:341.5px;top:459.97px;font-size:9px;line-height:11px;letter-spacing:0.45px">6001.492</div>
<div class="t" style="left:400.5px;top:459.97px;font-size:9px;line-height:11px;letter-spacing:0.45px">27550.902</div>
<div class="t" style="left:481.5px;top:459.97px;font-size:9px;line-height:11px;letter-spacing:0.45px">6425.010</div>
<div class="t" style="left:561.5px;top:459.97px;font-size:9px;line-height:11px;letter-spacing:0.45px">39501.442</div>
<div class="a" style="left:198px;top:470.16px;width:141px;height:11.68846153846154px;background:#ebe8d9"></div>
<div class="t" style="left:199px;top:471.16px;font-size:9px;line-height:11px">HL Crankset</div>
<div class="t" style="left:341.5px;top:471.16px;font-size:9px;line-height:11px;letter-spacing:0.45px">38150.053</div>
<div class="t" style="left:400.5px;top:471.16px;font-size:9px;line-height:11px;letter-spacing:0.45px">97107.3512</div>
<div class="t" style="left:481.5px;top:471.16px;font-size:9px;line-height:11px;letter-spacing:0.45px">13361.67</div>
<div class="t" style="left:561.5px;top:471.16px;font-size:9px;line-height:11px;letter-spacing:0.45px">148622.5822</div>
<div class="a" style="left:198px;top:481.35px;width:141px;height:11.68846153846154px;background:#ebe8d9"></div>
<div class="t" style="left:199px;top:482.35px;font-size:9px;line-height:11px">HL Fork</div>
<div class="t" style="left:341.5px;top:482.35px;font-size:9px;line-height:11px;letter-spacing:0.45px">7435.476</div>
<div class="t" style="left:400.5px;top:482.35px;font-size:9px;line-height:11px;letter-spacing:0.45px">53599.1336</div>
<div class="t" style="left:561.5px;top:482.35px;font-size:9px;line-height:11px;letter-spacing:0.45px">61034.6096</div>
<div class="a" style="left:198px;top:492.53px;width:141px;height:11.68846153846154px;background:#ebe8d9"></div>
<div class="t" style="left:199px;top:493.53px;font-size:9px;line-height:11px">HL Headset</div>
<div class="t" style="left:341.5px;top:493.53px;font-size:9px;line-height:11px;letter-spacing:0.45px">2020.626</div>
<div class="t" style="left:400.5px;top:493.53px;font-size:9px;line-height:11px;letter-spacing:0.45px">17763.064</div>
<div class="t" style="left:561.5px;top:493.53px;font-size:9px;line-height:11px;letter-spacing:0.45px">19083.69</div>
<div class="a" style="left:198px;top:503.72px;width:141px;height:11.68846153846154px;background:#ebe8d9"></div>
<div class="t" style="left:199px;top:504.72px;font-size:9px;line-height:11px">HL Mountain Frame - Black, 38</div>
<div class="t" style="left:400.5px;top:504.72px;font-size:9px;line-height:11px;letter-spacing:0.45px">92196.0547</div>
<div class="t" style="left:561.5px;top:504.72px;font-size:9px;line-height:11px;letter-spacing:0.45px">92196.0547</div>
<div class="a" style="left:198px;top:514.91px;width:141px;height:11.68846153846154px;background:#ebe8d9"></div>
<div class="t" style="left:199px;top:515.91px;font-size:9px;line-height:11px">HL Mountain Frame - Black, 38</div>
<div class="t" style="left:341.5px;top:515.91px;font-size:9px;line-height:11px;letter-spacing:0.45px">22081.365</div>
<div class="t" style="left:400.5px;top:515.91px;font-size:9px;line-height:11px;letter-spacing:0.45px">173730.338</div>
<div class="t" style="left:561.5px;top:515.91px;font-size:9px;line-height:11px;letter-spacing:0.45px">195811.703</div>
<div class="a" style="left:198px;top:235.2px;width:141px;height:1px;background:#aaa899"></div>
<div class="a" style="left:340px;top:235.2px;width:299px;height:1px;background:#e6e6e6"></div>
<div class="a" style="left:198px;top:246.39px;width:141px;height:1px;background:#aaa899"></div>
<div class="a" style="left:340px;top:246.39px;width:299px;height:1px;background:#e6e6e6"></div>
<div class="a" style="left:198px;top:257.58px;width:141px;height:1px;background:#aaa899"></div>
<div class="a" style="left:340px;top:257.58px;width:299px;height:1px;background:#e6e6e6"></div>
<div class="a" style="left:198px;top:268.77px;width:141px;height:1px;background:#aaa899"></div>
<div class="a" style="left:340px;top:268.77px;width:299px;height:1px;background:#e6e6e6"></div>
<div class="a" style="left:198px;top:279.95px;width:141px;height:1px;background:#aaa899"></div>
<div class="a" style="left:340px;top:279.95px;width:299px;height:1px;background:#e6e6e6"></div>
<div class="a" style="left:198px;top:291.14px;width:141px;height:1px;background:#aaa899"></div>
<div class="a" style="left:340px;top:291.14px;width:299px;height:1px;background:#e6e6e6"></div>
<div class="a" style="left:198px;top:302.33px;width:141px;height:1px;background:#aaa899"></div>
<div class="a" style="left:340px;top:302.33px;width:299px;height:1px;background:#e6e6e6"></div>
<div class="a" style="left:198px;top:313.52px;width:141px;height:1px;background:#aaa899"></div>
<div class="a" style="left:340px;top:313.52px;width:299px;height:1px;background:#e6e6e6"></div>
<div class="a" style="left:198px;top:324.71px;width:141px;height:1px;background:#aaa899"></div>
<div class="a" style="left:340px;top:324.71px;width:299px;height:1px;background:#e6e6e6"></div>
<div class="a" style="left:198px;top:335.9px;width:141px;height:1px;background:#aaa899"></div>
<div class="a" style="left:340px;top:335.9px;width:299px;height:1px;background:#e6e6e6"></div>
<div class="a" style="left:198px;top:347.08px;width:141px;height:1px;background:#aaa899"></div>
<div class="a" style="left:340px;top:347.08px;width:299px;height:1px;background:#e6e6e6"></div>
<div class="a" style="left:198px;top:358.27px;width:141px;height:1px;background:#aaa899"></div>
<div class="a" style="left:340px;top:358.27px;width:299px;height:1px;background:#e6e6e6"></div>
<div class="a" style="left:198px;top:369.46px;width:141px;height:1px;background:#aaa899"></div>
<div class="a" style="left:340px;top:369.46px;width:299px;height:1px;background:#e6e6e6"></div>
<div class="a" style="left:198px;top:380.65px;width:141px;height:1px;background:#aaa899"></div>
<div class="a" style="left:340px;top:380.65px;width:299px;height:1px;background:#e6e6e6"></div>
<div class="a" style="left:198px;top:391.84px;width:141px;height:1px;background:#aaa899"></div>
<div class="a" style="left:340px;top:391.84px;width:299px;height:1px;background:#e6e6e6"></div>
<div class="a" style="left:198px;top:403.03px;width:141px;height:1px;background:#aaa899"></div>
<div class="a" style="left:340px;top:403.03px;width:299px;height:1px;background:#e6e6e6"></div>
<div class="a" style="left:198px;top:414.22px;width:141px;height:1px;background:#aaa899"></div>
<div class="a" style="left:340px;top:414.22px;width:299px;height:1px;background:#e6e6e6"></div>
<div class="a" style="left:198px;top:425.4px;width:141px;height:1px;background:#aaa899"></div>
<div class="a" style="left:340px;top:425.4px;width:299px;height:1px;background:#e6e6e6"></div>
<div class="a" style="left:198px;top:436.59px;width:141px;height:1px;background:#aaa899"></div>
<div class="a" style="left:340px;top:436.59px;width:299px;height:1px;background:#e6e6e6"></div>
<div class="a" style="left:198px;top:447.78px;width:141px;height:1px;background:#aaa899"></div>
<div class="a" style="left:340px;top:447.78px;width:299px;height:1px;background:#e6e6e6"></div>
<div class="a" style="left:198px;top:458.97px;width:141px;height:1px;background:#aaa899"></div>
<div class="a" style="left:340px;top:458.97px;width:299px;height:1px;background:#e6e6e6"></div>
<div class="a" style="left:198px;top:470.16px;width:141px;height:1px;background:#aaa899"></div>
<div class="a" style="left:340px;top:470.16px;width:299px;height:1px;background:#e6e6e6"></div>
<div class="a" style="left:198px;top:481.35px;width:141px;height:1px;background:#aaa899"></div>
<div class="a" style="left:340px;top:481.35px;width:299px;height:1px;background:#e6e6e6"></div>
<div class="a" style="left:198px;top:492.53px;width:141px;height:1px;background:#aaa899"></div>
<div class="a" style="left:340px;top:492.53px;width:299px;height:1px;background:#e6e6e6"></div>
<div class="a" style="left:198px;top:503.72px;width:141px;height:1px;background:#aaa899"></div>
<div class="a" style="left:340px;top:503.72px;width:299px;height:1px;background:#e6e6e6"></div>
<div class="a" style="left:198px;top:514.91px;width:141px;height:1px;background:#aaa899"></div>
<div class="a" style="left:340px;top:514.91px;width:299px;height:1px;background:#e6e6e6"></div>
<div class="a" style="left:198px;top:526.1px;width:141px;height:1px;background:#aaa899"></div>
<div class="a" style="left:340px;top:526.1px;width:299px;height:1px;background:#e6e6e6"></div>
<div class="a" style="left:399px;top:224px;width:1px;height:302px;background:#e6e6e6"></div>
<div class="a" style="left:458px;top:224px;width:1px;height:302px;background:#e6e6e6"></div>
<div class="a" style="left:539px;top:224px;width:1px;height:302px;background:#e6e6e6"></div>
<div class="a" style="left:198px;top:527px;width:141px;height:2px;background:#ebe8d9"></div>
<div class="a" style="left:196px;top:529px;width:443px;height:1px;background:#9a9a92"></div>
<div class="a" style="left:38px;top:530px;width:601px;height:1px;background:#e8ecf4"></div>
<div class="a" style="left:38px;top:531px;width:601px;height:1px;background:#b3bfd6"></div>
<div class="a" style="left:38px;top:532px;width:601px;height:2px;background:#c6d1e8"></div>
</div>
</body></html>
